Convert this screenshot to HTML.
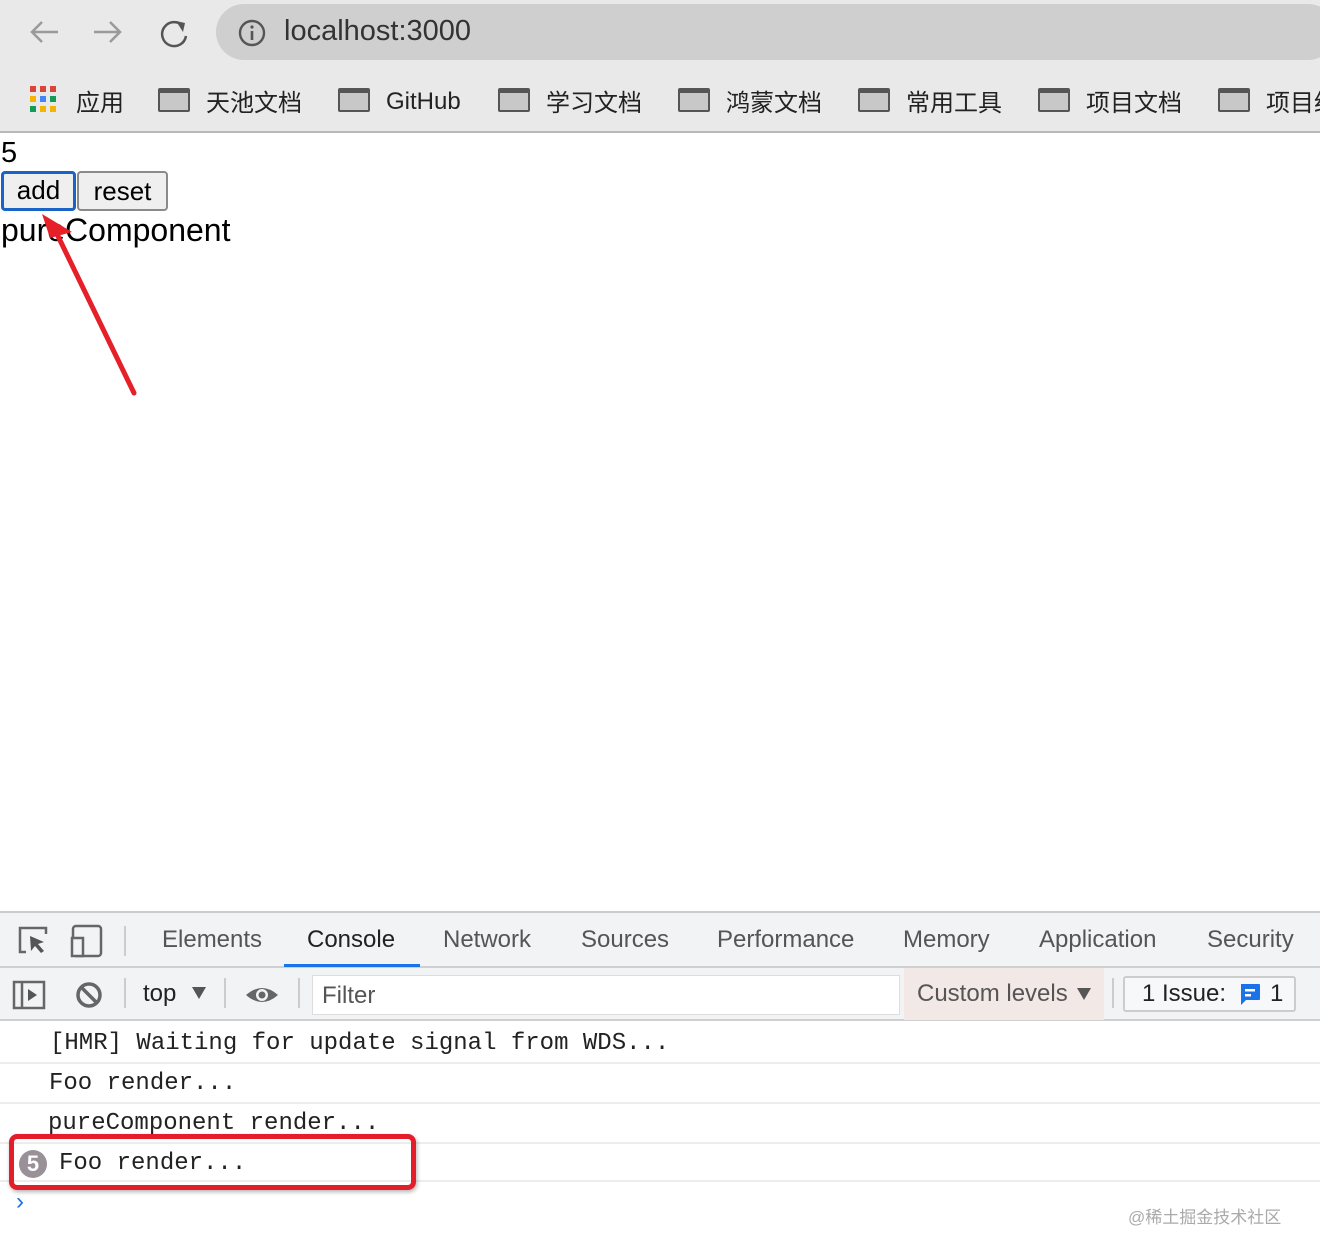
<!DOCTYPE html>
<html><head><meta charset="utf-8"><style>
*{margin:0;padding:0;box-sizing:border-box}
body{width:1320px;height:1256px;overflow:hidden;background:#fff;font-family:"Liberation Sans","Noto Sans CJK SC",sans-serif;position:relative}
.abs{position:absolute}
.top{left:0;top:0;width:1320px;height:133px;background:#e9e9e9;border-bottom:2px solid #b8b8b8}
.url{left:216px;top:4px;width:1120px;height:56px;background:#cfcfcf;border-radius:28px}
.bm{top:82px;height:36px;font-size:24px;color:#222;white-space:nowrap;display:flex;align-items:center}
.fold{display:block;width:32px;height:24px;border:2px solid #555;background:#c8c8c8;border-radius:2px;margin-right:16px;border-top-width:5px}
.mono{font-family:"Liberation Mono","DejaVu Sans Mono",monospace;font-size:24px;color:#222}
.tab{top:926px;font-size:24px;color:#555}
.line{left:0;width:1320px;height:2px;background:#ececec}
</style></head><body>
<div class="abs top"></div>
<svg class="abs" style="left:28px;top:18px" width="160" height="30"><g fill="none" stroke="#9a9a9a" stroke-width="2.5"><path d="M30 14H4M14 4L4 14l10 10"/><path d="M66 14h26M82 4l10 10-10 10"/></g><path d="M155 8a12 12 0 1 0 3 10" fill="none" stroke="#555" stroke-width="2.5"/><path d="M148 3l9 2-2 9z" fill="#555"/></svg>
<div class="abs url"></div>
<svg class="abs" style="left:238px;top:19px" width="28" height="28"><circle cx="14" cy="14" r="12" fill="none" stroke="#555" stroke-width="2.4"/><rect x="12.7" y="12" width="2.6" height="9" fill="#555"/><circle cx="14" cy="8" r="1.6" fill="#555"/></svg>
<div class="abs" style="left:284px;top:15px;font-size:29px;color:#333">localhost:3000</div>
<svg class="abs" style="left:30px;top:86px" width="28" height="26"><g><rect x="0" y="0" width="6" height="6" fill="#db4437"/><rect x="10" y="0" width="6" height="6" fill="#db4437"/><rect x="20" y="0" width="6" height="6" fill="#db4437"/><rect x="0" y="10" width="6" height="6" fill="#f4b400"/><rect x="10" y="10" width="6" height="6" fill="#4285f4"/><rect x="20" y="10" width="6" height="6" fill="#0f9d58"/><rect x="0" y="20" width="6" height="6" fill="#0f9d58"/><rect x="10" y="20" width="6" height="6" fill="#f4b400"/><rect x="20" y="20" width="6" height="6" fill="#f4b400"/></g></svg>
<div class="abs bm" style="left:76px">应用</div>
<div class="abs bm" style="left:158px"><span class="fold"></span>天池文档</div>
<div class="abs bm" style="left:338px"><span class="fold"></span><span style="margin-top:4px">GitHub</span></div>
<div class="abs bm" style="left:498px"><span class="fold"></span>学习文档</div>
<div class="abs bm" style="left:678px"><span class="fold"></span>鸿蒙文档</div>
<div class="abs bm" style="left:858px"><span class="fold"></span>常用工具</div>
<div class="abs bm" style="left:1038px"><span class="fold"></span>项目文档</div>
<div class="abs bm" style="left:1218px"><span class="fold"></span>项目经</div>

<div class="abs" style="left:1px;top:137px;font-size:29px;color:#000">5</div>
<div class="abs" style="left:1px;top:171px;width:75px;height:40px;border:3px solid #1a64c8;border-radius:4px;background:#efefef;font-size:26px;text-align:center;line-height:33px">add</div>
<div class="abs" style="left:77px;top:171px;width:91px;height:40px;border:2px solid #8a8a8a;border-radius:4px;background:#efefef;font-size:26px;text-align:center;line-height:36px">reset</div>
<div class="abs" style="left:1px;top:212px;font-size:32px;color:#000">pureComponent</div>
<svg class="abs" style="left:0;top:200px" width="160" height="210"><path d="M134 193L56 32" stroke="#e52028" stroke-width="5" stroke-linecap="round" fill="none"/><path d="M42 14l30 18-22 6z" fill="#e52028"/></svg>

<div class="abs" style="left:0;top:911px;width:1320px;height:110px;background:#f1f3f4;border-top:2px solid #ccc"></div>
<div class="abs" style="left:0;top:966px;width:1320px;height:2px;background:#cfcfcf"></div>
<div class="abs" style="left:0;top:1019px;width:1320px;height:2px;background:#cfcfcf"></div>
<svg class="abs" style="left:16px;top:924px" width="90" height="34"><path d="M10 28H4V4h26v6" fill="none" stroke="#666" stroke-width="2.5"/><path d="M14 12l14 6-6 2 6 7-3 2-6-7-4 5z" fill="#555"/><rect x="57" y="2" width="28" height="30" rx="3" fill="none" stroke="#666" stroke-width="2.5"/><rect x="56" y="14" width="11" height="18" fill="#f1f3f4" stroke="#666" stroke-width="2.5"/></svg>
<div class="abs" style="left:124px;top:926px;width:2px;height:30px;background:#ccc"></div>
<div class="abs tab" style="left:162px">Elements</div>
<div class="abs tab" style="left:307px;color:#222">Console</div>
<div class="abs" style="left:284px;top:964px;width:136px;height:3px;background:#1a73e8"></div>
<div class="abs tab" style="left:443px">Network</div>
<div class="abs tab" style="left:581px">Sources</div>
<div class="abs tab" style="left:717px">Performance</div>
<div class="abs tab" style="left:903px">Memory</div>
<div class="abs tab" style="left:1039px">Application</div>
<div class="abs tab" style="left:1207px">Security</div>

<svg class="abs" style="left:12px;top:980px" width="300" height="30"><rect x="2" y="2" width="30" height="26" fill="none" stroke="#666" stroke-width="2.5"/><path d="M10 2v26" stroke="#666" stroke-width="2.5"/><path d="M16 9l9 6-9 6z" fill="#555"/><circle cx="77" cy="15" r="11" fill="none" stroke="#666" stroke-width="3.5"/><path d="M69 7l16 16" stroke="#666" stroke-width="3.5"/><path d="M180 7h14l-7 12z" fill="#555"/><path d="M234 15q16-14 32 0q-16 14-32 0z" fill="#666"/><circle cx="250" cy="15" r="6" fill="#f1f3f4"/><circle cx="250" cy="15" r="3.5" fill="#666"/></svg>
<div class="abs" style="left:124px;top:978px;width:2px;height:30px;background:#ccc"></div>
<div class="abs" style="left:143px;top:980px;font-size:24px;color:#222">top</div>
<div class="abs" style="left:224px;top:978px;width:2px;height:30px;background:#ccc"></div>
<div class="abs" style="left:298px;top:978px;width:2px;height:30px;background:#ccc"></div>
<div class="abs" style="left:312px;top:975px;width:588px;height:40px;background:#fff;border:1px solid #ddd"></div>
<div class="abs" style="left:322px;top:982px;font-size:24px;color:#555">Filter</div>
<div class="abs" style="left:904px;top:968px;width:200px;height:52px;background:#f2e8e6"></div>
<div class="abs" style="left:917px;top:980px;font-size:24px;color:#555">Custom levels</div>
<svg class="abs" style="left:1076px;top:986px" width="16" height="16"><path d="M1 2h14l-7 12z" fill="#555"/></svg>
<div class="abs" style="left:1112px;top:978px;width:2px;height:30px;background:#ccc"></div>
<div class="abs" style="left:1123px;top:976px;width:173px;height:36px;border:2px solid #ccc;border-radius:3px;background:#f7f8f9"></div>
<div class="abs" style="left:1142px;top:980px;font-size:24px;color:#222">1 Issue:</div>
<svg class="abs" style="left:1238px;top:982px" width="24" height="24"><path d="M3 2h18a1 1 0 0 1 1 1v14a1 1 0 0 1-1 1H8l-5 5z" fill="#1a73e8"/><rect x="7" y="7" width="10" height="2.5" fill="#fff"/><rect x="7" y="12" width="6" height="2.5" fill="#fff"/></svg>
<div class="abs" style="left:1270px;top:980px;font-size:24px;color:#222">1</div>

<div class="abs mono" style="left:50px;top:1030px">[HMR] Waiting for update signal from WDS...</div>
<div class="abs line" style="top:1062px"></div>
<div class="abs mono" style="left:49px;top:1070px">Foo render...</div>
<div class="abs line" style="top:1102px"></div>
<div class="abs mono" style="left:48px;top:1110px">pureComponent render...</div>
<div class="abs line" style="top:1142px"></div>
<div class="abs" style="left:19px;top:1150px;width:28px;height:28px;border-radius:50%;background:#9a9098;color:#fff;font-size:22px;text-align:center;line-height:28px;font-weight:bold">5</div>
<div class="abs mono" style="left:59px;top:1150px">Foo render...</div>
<div class="abs line" style="top:1180px"></div>
<div class="abs" style="left:9px;top:1134px;width:407px;height:56px;border:5px solid #e31e2a;border-radius:8px;box-shadow:1px 2px 4px rgba(0,0,0,.3)"></div>
<div class="abs" style="left:16px;top:1188px;font-size:24px;color:#1a73e8">›</div>
<div class="abs" style="left:1128px;top:1203px;font-size:17px;color:#aaa">@稀土掘金技术社区</div>
</body></html>
